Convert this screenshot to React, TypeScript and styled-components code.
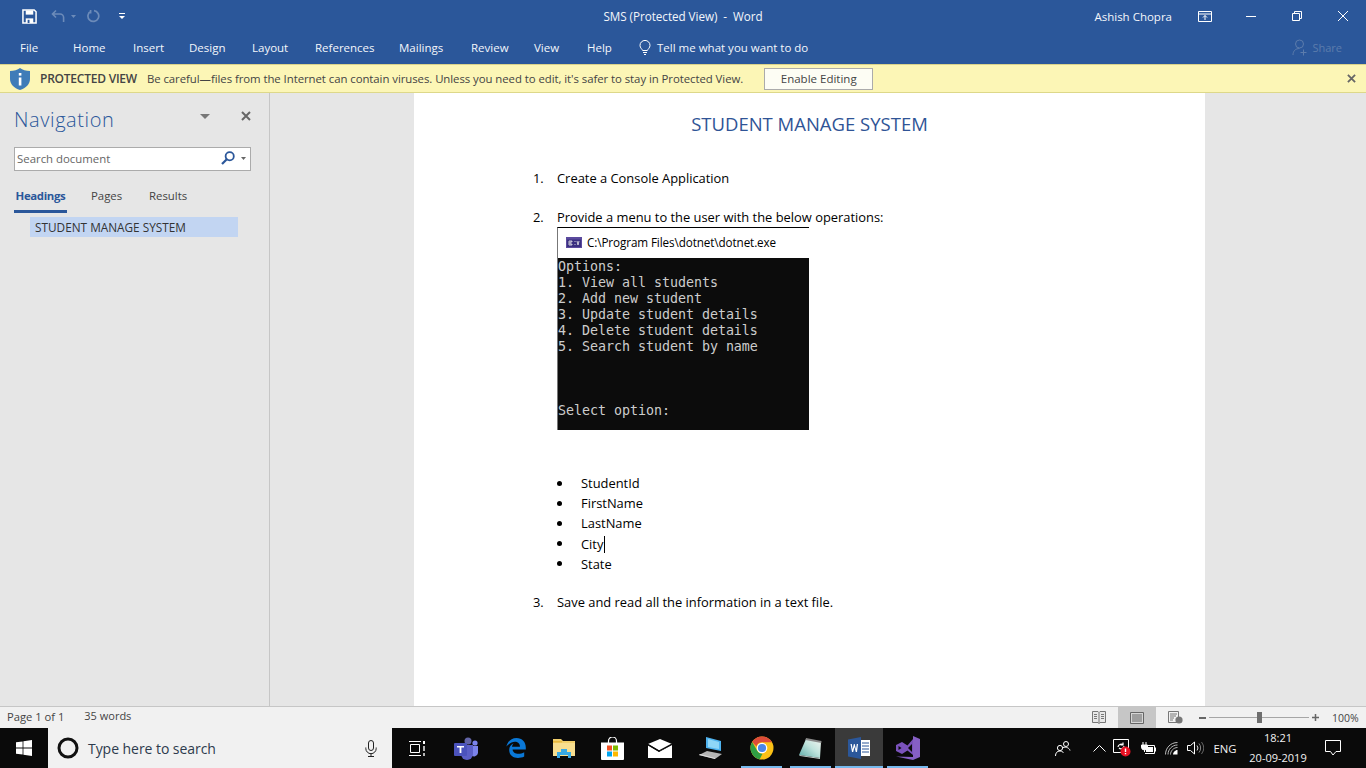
import React, { FC } from "react";
import styled, { createGlobalStyle } from "styled-components";

const UI_FONT = '"Open Sans", "Noto Sans", sans-serif';

const GlobalStyle = createGlobalStyle`
  html, body {
    margin: 0;
    padding: 0;
    width: 1366px;
    height: 768px;
    overflow: hidden;
    background: #e6e6e6;
    font-family: ${UI_FONT};
    font-size: 12px;
  }
  * { box-sizing: border-box; }
`;

const Screen = styled.div`
  width: 1366px;
  height: 768px;
  display: flex;
  flex-direction: column;
`;

/* ---- title bar ---- */

const TitleBar = styled.header`
  height: 32px;
  flex: none;
  background: #2b579a;
  color: #fff;
  display: grid;
  grid-template-columns: 1fr auto 1fr;
  align-items: center;
`;

const QuickAccess = styled.div`
  display: flex;
  align-items: center;
  padding-left: 22px;
  height: 100%;
`;

const QuickIcon = styled.svg<{ $gap?: number }>`
  display: block;
  margin-right: ${(p) => p.$gap ?? 0}px;
`;

const WindowTitle = styled.div`
  font-size: 11.7px;
  letter-spacing: -0.05px;
  white-space: pre;
  color: #f3f6fa;
`;

const WindowControls = styled.div`
  display: flex;
  align-items: center;
  justify-content: flex-end;
  height: 100%;
`;

const UserName = styled.span`
  font-size: 11.5px;
  color: #f3f6fa;
  margin-right: 10px;
`;

const ControlSlot = styled.div`
  width: 46px;
  display: flex;
  justify-content: center;
  align-items: center;
  height: 100%;
`;

/* ---- ribbon tabs ---- */

const Ribbon = styled.nav`
  height: 33px;
  flex: none;
  background: #2b579a;
  border-bottom: 1px solid #d9d28a;
  display: flex;
  align-items: center;
  padding-left: 20px;
  padding-bottom: 1px;
  color: #f3f6fa;
  font-size: 11.5px;
`;

const RibbonTab = styled.span<{ $w: number }>`
  width: ${(p) => p.$w}px;
  flex: none;
  white-space: nowrap;
`;

const TellMe = styled.span`
  display: flex;
  align-items: center;
  gap: 6px;
  white-space: nowrap;
`;

const ShareButton = styled.span`
  margin-left: auto;
  margin-right: 24px;
  display: flex;
  align-items: center;
  gap: 4px;
  color: #5c7cac;
  font-size: 11px;
`;

/* ---- protected view bar ---- */

const ProtectedBar = styled.div`
  height: 28px;
  flex: none;
  background: #fcf6b6;
  border-bottom: 1px solid #ddd88a;
  display: flex;
  align-items: center;
  padding-left: 10px;
  color: #444;
  font-size: 11.4px;
  white-space: nowrap;
`;

const ProtectedLabel = styled.strong`
  font-size: 12px;
  font-weight: 600;
  margin: 0 10px;
  letter-spacing: -0.23px;
`;

const ProtectedText = styled.span`
  letter-spacing: -0.06px;
`;

const EnableButton = styled.button`
  margin-left: 21px;
  width: 109px;
  height: 22px;
  padding: 0;
  background: #fdfdf4;
  border: 1px solid #ababab;
  font: 11.5px ${UI_FONT};
  color: #444;
`;

const BarClose = styled.svg`
  margin-left: auto;
  margin-right: 10px;
`;

/* ---- main area ---- */

const Main = styled.div`
  flex: 1;
  min-height: 0;
  display: flex;
  background: #e6e6e6;
`;

const NavPane = styled.aside`
  width: 270px;
  flex: none;
  border-right: 1px solid #c6c6c6;
  padding: 12px 18px 0 14px;
  display: flex;
  flex-direction: column;
`;

const NavHeader = styled.div`
  display: flex;
  align-items: center;
  height: 28px;

  & > svg {
    margin-bottom: 6px;
  }
`;

const NavTitle = styled.h1`
  margin: 0;
  flex: 1;
  font-size: 20px;
  font-weight: 300;
  color: #2b579a;
  letter-spacing: 0.6px;
`;

const NavSearch = styled.div`
  margin-top: 14px;
  width: 237px;
  height: 24px;
  background: #fff;
  border: 1px solid #ababab;
  display: flex;
  align-items: center;
  padding: 0 4px 2px 2px;
  color: #666;
  font-size: 11.4px;
`;

const NavSearchText = styled.span`
  flex: 1;
`;

const NavTabs = styled.div`
  margin-top: 13px;
  display: flex;
  height: 29px;
  width: 237px;
  font-size: 11.4px;
  color: #444;
`;

const NavTab = styled.span<{ $active?: boolean; $w: number }>`
  width: ${(p) => p.$w}px;
  text-align: ${(p) => (p.$active ? "center" : "left")};
  padding-left: ${(p) => (p.$active ? 0 : 13)}px;
  padding-top: 4px;
  color: ${(p) => (p.$active ? "#2b579a" : "#444")};
  font-weight: ${(p) => (p.$active ? 700 : 400)};
  letter-spacing: ${(p) => (p.$active ? "-0.35px" : "0")};
  border-bottom: 3px solid ${(p) => (p.$active ? "#2b579a" : "transparent")};
`;

const NavTabSpacer = styled.span`
  width: 11px;
`;

const HeadingRow = styled.div`
  margin: 4px 0 0 16px;
  width: 208px;
  height: 20px;
  background: #c2d5f2;
  padding-left: 5px;
  line-height: 20px;
  color: #333;
  font-size: 11.8px;
  white-space: nowrap;
`;

const DocArea = styled.main`
  flex: 1;
  display: flex;
  padding-left: 144px;
  min-width: 0;
`;

const Page = styled.article`
  width: 791px;
  flex: none;
  background: #fff;
  color: #000;
  padding: 19px 0 0 119px;
  font-size: 12.9px;
`;

const DocTitle = styled.h2`
  margin: 0 0 0 -119px;
  text-align: center;
  font-size: 18.5px;
  font-weight: 400;
  color: #2f5496;
  line-height: 24px;
`;

const ListRow = styled.div<{ $top: number }>`
  display: flex;
  margin-top: ${(p) => p.$top}px;
  line-height: 20px;
  height: 20px;
`;

const ItemMark = styled.span`
  width: 24px;
  flex: none;
`;

const Console = styled.div`
  margin: 0 0 0 24px;
  width: 252px;
  height: 203px;
  border-top: 1px solid #000;
  border-left: 1px solid #777;
`;

const ConsoleTitle = styled.div`
  height: 30px;
  display: flex;
  align-items: center;
  padding: 0 0 2px 8px;
  gap: 5px;
  font-size: 11.7px;
  letter-spacing: -0.1px;
  color: #000;
`;

const ConsoleBody = styled.pre`
  margin: 0;
  height: 172px;
  padding-top: 1px;
  background: #0c0c0c;
  color: #cccccc;
  font: 13.33px/16px "DejaVu Sans Mono", "Liberation Mono", monospace;
  letter-spacing: -0.03px;
  overflow: hidden;
`;

const BulletList = styled.div`
  margin-top: 43px;
  padding-left: 24px;
`;

const BulletRow = styled.div`
  display: flex;
  align-items: center;
  height: 20.2px;
  line-height: 20px;
`;

const BulletDot = styled.span`
  width: 5px;
  height: 5px;
  border-radius: 50%;
  background: #000;
  margin-right: 19px;
  flex: none;
`;

const Caret = styled.span`
  display: inline-block;
  width: 1px;
  height: 17px;
  margin-left: 1px;
  background: #000;
  vertical-align: -4px;
`;

/* ---- status bar ---- */

const StatusBar = styled.footer`
  height: 22px;
  flex: none;
  background: #f1f1f1;
  border-top: 1px solid #c6c6c6;
  display: flex;
  align-items: center;
  color: #444;
  font-size: 11.2px;
`;

const PageCount = styled.span`
  margin-left: 7px;
  margin-bottom: 2px;
`;

const WordCount = styled.span`
  margin-left: 20px;
  margin-bottom: 4px;
  font-size: 11px;
`;

const ViewButtons = styled.div`
  margin-left: auto;
  display: flex;
  height: 100%;
`;

const ViewButton = styled.div<{ $active?: boolean }>`
  width: 38px;
  display: flex;
  align-items: center;
  justify-content: center;
  background: ${(p) => (p.$active ? "#c6c6c6" : "transparent")};
`;

const ZoomBox = styled.div`
  display: flex;
  align-items: center;
  margin-left: 5px;
  gap: 3px;
`;

const ZoomTrack = styled.div`
  width: 100px;
  height: 1px;
  background: #a6a6a6;
  display: flex;
  align-items: center;
  justify-content: center;
`;

const ZoomThumb = styled.span`
  width: 5px;
  height: 11px;
  background: #6e6e6e;
  flex: none;
`;

const ZoomLabel = styled.span`
  margin: 0 7px 0 13px;
  width: 27px;
  font-size: 10.5px;
  white-space: nowrap;
`;

/* ---- taskbar ---- */

const Taskbar = styled.div`
  height: 40px;
  flex: none;
  background: #0a0a0a;
  display: flex;
  align-items: stretch;
  color: #fff;
`;

const StartButton = styled.div`
  width: 48px;
  display: flex;
  align-items: center;
  justify-content: center;
`;

const SearchBox = styled.div`
  width: 344px;
  background: #f1f1f1;
  display: flex;
  align-items: center;
  padding: 0 15px 0 9px;
  color: #2d3b4d;
  font-size: 14px;
`;

const SearchText = styled.span`
  flex: 1;
  margin-left: 9px;
  letter-spacing: -0.05px;
`;

const TaskButton = styled.div<{ $w?: number; $active?: boolean; $running?: boolean }>`
  width: ${(p) => p.$w ?? 49}px;
  flex: none;
  display: flex;
  align-items: center;
  justify-content: center;
  position: relative;
  background: ${(p) => (p.$active ? "#3a3a3a" : "transparent")};

  &::after {
    content: "";
    display: ${(p) => (p.$running ? "block" : "none")};
    position: absolute;
    left: ${(p) => (p.$active ? 0 : 4)}px;
    right: ${(p) => (p.$active ? 0 : 4)}px;
    bottom: 0;
    height: 2px;
    background: #76b9ed;
  }
`;

const Tray = styled.div`
  margin-left: auto;
  padding-right: 13px;
  display: flex;
  align-items: center;
  color: #f2f2f2;
`;

const TraySlot = styled.div<{ $w: number }>`
  width: ${(p) => p.$w}px;
  display: flex;
  justify-content: center;
  align-items: center;
  font-size: 11.3px;
`;

const Clock = styled.div`
  width: 70px;
  text-align: center;
  font-size: 11px;
  line-height: 20px;
`;

/* ---- drawings ---- */

const SaveIcon: FC = () => (
  <QuickIcon width="15" height="15" viewBox="0 0 16 16" $gap={14}>
    <path d="M1 1h12l2 2v12H1z" fill="none" stroke="#fff" strokeWidth="1.6" />
    <rect x="4" y="1.5" width="8" height="4.5" fill="#fff" />
    <rect x="4" y="10" width="8" height="5" fill="#fff" />
    <rect x="6" y="11.5" width="2" height="3.5" fill="#2b579a" />
  </QuickIcon>
);

const UndoIcon: FC = () => (
  <QuickIcon width="14" height="14" viewBox="0 0 14 14" $gap={6}>
    <path d="M5 1.5 1.5 5 5 8.5M1.5 5H9a3.6 3.6 0 0 1 3.6 3.6V13" fill="none" stroke="#6c8bb9" strokeWidth="1.6" />
  </QuickIcon>
);

const SmallCaret: FC<{ color: string; gap?: number }> = ({ color, gap }) => (
  <QuickIcon width="5" height="3" viewBox="0 0 5 3" $gap={gap}>
    <path d="M0 0h5L2.5 3z" fill={color} />
  </QuickIcon>
);

const RedoIcon: FC = () => (
  <QuickIcon width="14" height="14" viewBox="0 0 14 14" $gap={18}>
    <path d="M4 2.2A5.4 5.4 0 1 0 7 1.7M3.6 1v3.6" fill="none" stroke="#6c8bb9" strokeWidth="1.7" />
  </QuickIcon>
);

const CustomizeIcon: FC = () => (
  <QuickIcon width="6" height="6" viewBox="0 0 6 6">
    <rect width="6" height="1" fill="#fff" />
    <path d="M0 3h6L3 6z" fill="#fff" />
  </QuickIcon>
);

const RibbonDisplayIcon: FC = () => (
  <svg width="14" height="11" viewBox="0 0 14 11">
    <path d="M.5.5h13v10H.5zM.5 3h13" fill="none" stroke="#fff" />
    <path d="M7 9V4.5M5 6.5l2-2 2 2" fill="none" stroke="#fff" />
  </svg>
);

const MinimizeIcon: FC = () => (
  <svg width="10" height="1" viewBox="0 0 10 1">
    <rect width="10" height="1" fill="#fff" />
  </svg>
);

const RestoreIcon: FC = () => (
  <svg width="10" height="10" viewBox="0 0 10 10">
    <path d="M.5 2.5h7v7h-7zM2.5 2.5v-2h7v7h-2" fill="none" stroke="#fff" />
  </svg>
);

const CloseIcon: FC = () => (
  <svg width="10" height="10" viewBox="0 0 10 10">
    <path d="M0 0l10 10M10 0 0 10" stroke="#fff" />
  </svg>
);

const BulbIcon: FC = () => (
  <svg width="12" height="16" viewBox="0 0 12 16">
    <path d="M3.6 10.5C3.2 9 1 8 1 5.4a5 5 0 0 1 10 0c0 2.6-2.2 3.6-2.6 5.1z" fill="none" stroke="#fff" />
    <path d="M4 12.5h4M5 14.5h2" stroke="#fff" />
  </svg>
);

const ShareIcon: FC = () => (
  <svg width="16" height="17" viewBox="0 0 16 17">
    <circle cx="7.5" cy="5" r="4" fill="none" stroke="#5c7cac" />
    <path d="M1 16c0-4 2.5-6.5 6.5-6.5M11.5 10.5v6M8.5 13.5h6" fill="none" stroke="#5c7cac" />
  </svg>
);

const ShieldIcon: FC = () => (
  <svg width="20" height="22" viewBox="0 0 20 22" style={{ flex: "none" }}>
    <path d="M10 0c2.5 2 6 3 10 3v8c0 5-4 9-10 11C4 20 0 16 0 11V3c4 0 7.5-1 10-3z" fill="#3f7cb8" />
    <rect x="8.8" y="5" width="2.6" height="2.6" fill="#fff" />
    <rect x="8.8" y="9.5" width="2.6" height="8" fill="#fff" />
  </svg>
);

const BoldClose: FC<{ size: number }> = ({ size }) => (
  <svg width={size} height={size} viewBox="0 0 10 10">
    <path d="M1 1l8 8M9 1 1 9" stroke="#666" strokeWidth="2" />
  </svg>
);

const SearchGlass: FC = () => (
  <svg width="14" height="14" viewBox="0 0 14 14" style={{ marginRight: 6 }}>
    <circle cx="8.7" cy="5.3" r="4.1" fill="none" stroke="#2b579a" strokeWidth="1.8" />
    <path d="M5.8 8.2 1 13" stroke="#2b579a" strokeWidth="2.2" />
  </svg>
);

const ConsoleIcon: FC = () => (
  <svg width="16" height="11" viewBox="0 0 16 11">
    <rect width="16" height="11" fill="#5b4a9e" />
    <rect x="1" y="2.5" width="14" height="7.5" fill="#3a3080" />
    <path d="M3 4h3v1H4v2h2v1H3zM9 4v1M9 7v1M11 4l1 4M13 4l-1 4" stroke="#eee" strokeWidth=".8" fill="none" />
  </svg>
);

const ReadModeIcon: FC = () => (
  <svg width="14" height="13" viewBox="0 0 14 13">
    <path d="M.5.5h5.5L7 1.5 8 .5h5.5v11H8L7 12.5 6 11.5H.5zM7 1.5v11" fill="#e8e8e8" stroke="#777" />
    <path d="M2 3.5h3M2 5.5h3M2 7.5h3M9 3.5h3M9 5.5h3M9 7.5h3" stroke="#777" />
  </svg>
);

const PrintLayoutIcon: FC = () => (
  <svg width="14" height="12" viewBox="0 0 14 12">
    <path d="M.5.5h13v11H.5z" fill="#d6d6d6" stroke="#666" />
    <path d="M2 3h10M2 5h10M2 7h10M2 9h10" stroke="#666" />
  </svg>
);

const WebLayoutIcon: FC = () => (
  <svg width="15" height="13" viewBox="0 0 15 13">
    <path d="M.5.5h10v11H.5z" fill="none" stroke="#777" />
    <path d="M2 3h7M2 5h6M2 7h4M2 9h3" stroke="#777" />
    <circle cx="11" cy="9" r="3.6" fill="#777" />
  </svg>
);

const WinLogo: FC = () => (
  <svg width="16" height="16" viewBox="0 0 16 16">
    <path d="M0 2.3 6.6 1.4v6.2H0zM7.4 1.3 16 0v7.6H7.4zM0 8.4h6.6v6.2L0 13.7zM7.4 8.4H16V16l-8.6-1.3z" fill="#fff" />
  </svg>
);

const CortanaIcon: FC = () => (
  <svg width="22" height="22" viewBox="0 0 22 22" style={{ flex: "none" }}>
    <circle cx="11" cy="11" r="9" fill="none" stroke="#111" strokeWidth="3" />
  </svg>
);

const MicIcon: FC = () => (
  <svg width="12" height="17" viewBox="0 0 12 17">
    <rect x="3.5" y=".5" width="5" height="10" rx="2.5" fill="none" stroke="#222" />
    <path d="M.8 7.5v1a5.2 5.2 0 0 0 10.4 0v-1M6 13.5v3M3 16.5h6" fill="none" stroke="#222" />
  </svg>
);

const TaskViewIcon: FC = () => (
  <svg width="16" height="15" viewBox="0 0 16 15">
    <path d="M0 .5h12M0 14.5h12M1.5 3.5h9v8h-9z" fill="none" stroke="#fff" />
    <rect x="14" y="0" width="2" height="3" fill="#fff" />
    <path d="M15 5v5M15 12v3" stroke="#fff" strokeWidth="1.4" />
  </svg>
);

const TeamsIcon: FC = () => (
  <svg width="25" height="23" viewBox="0 0 25 23">
    <circle cx="14" cy="4" r="3.5" fill="#6264a7" />
    <circle cx="21" cy="6" r="2.6" fill="#7b83eb" />
    <path d="M17 9h7v7a4 4 0 0 1-7 2z" fill="#7b83eb" />
    <path d="M7 8h12v9a6 6 0 0 1-12 0z" fill="#5b5fc7" />
    <rect x="0" y="6" width="13" height="13" rx="1" fill="#4b53bc" />
    <path d="M3 9h7v1.6H7.4V16H5.6v-5.4H3z" fill="#fff" />
  </svg>
);

const EdgeIcon: FC = () => (
  <svg width="20" height="20" viewBox="0 0 20 20">
    <path d="M.3 9C1.3 3.6 5.4 0 10.5 0c5.6 0 9.3 4 9.3 9.6v2H6.6c.2 4.4 6.6 5.5 11.6 2.7v4.2c-5.8 2.9-14.8 1.9-15-6.5-.1-3 1.500-5.500 4.400-6.800-1 1.200-1.500 2.300-1.600 3.600h7.900c.5-4.600-6.500-8.200-13.600-.2z" fill="#0a78d7" />
  </svg>
);

const ExplorerIcon: FC = () => (
  <svg width="22" height="19" viewBox="0 0 22 19">
    <path d="M0 0h8l2 2h12v15H0z" fill="#f2cf6b" />
    <path d="M0 4h22v13H0z" fill="#f8de8f" />
    <path d="M0 2h9v1.500H0z" fill="#e8b93f" />
    <path d="M4 19v-6h4v-3h6v3h4v6h-3v-3H7v3z" fill="#38a9e4" />
  </svg>
);

const StoreIcon: FC = () => (
  <svg width="23" height="23" viewBox="0 0 23 23">
    <path d="M7.500 6V4a4 4 0 0 1 8 0v2" fill="none" stroke="#fff" strokeWidth="1.200" />
    <path d="M0 5.500h23V22a1 1 0 0 1-1 1H1a1 1 0 0 1-1-1z" fill="#fff" />
    <rect x="6" y="8.500" width="5" height="5" fill="#f25022" />
    <rect x="12" y="8.500" width="5" height="5" fill="#7fba00" />
    <rect x="6" y="14.500" width="5" height="5" fill="#00a4ef" />
    <rect x="12" y="14.500" width="5" height="5" fill="#ffb900" />
  </svg>
);

const MailIcon: FC = () => (
  <svg width="24" height="19" viewBox="0 0 24 19">
    <path d="M0 5 12 0l12 5-12 7z" fill="#fff" />
    <path d="M0 6.500 11 13l13-7V19H0z" fill="#fff" />
    <path d="M0 5.500 11 12l13-7" fill="none" stroke="#0a0a0a" strokeWidth="1.400" />
  </svg>
);

const ThisPcIcon: FC = () => (
  <svg width="24" height="22" viewBox="0 0 24 22">
    <path d="M7 0l15 4v10L7 11z" fill="#4fb3ef" />
    <path d="M9 2l11 3v7L9 10z" fill="#8fd6f7" />
    <path d="M0 18l8-4 15 3-7 5z" fill="#b5b5b5" />
    <path d="M0 18l16 4v-1L1 17z" fill="#ddd" />
  </svg>
);

const ChromeIcon: FC = () => (
  <svg width="24" height="24" viewBox="0 0 24 24">
    <circle cx="12" cy="12" r="11.500" fill="#fbc116" />
    <path d="M12 .5a11.500 11.500 0 0 1 10 5.800H12a5.700 5.700 0 0 0-5.500 4.200L2.200 6A11.500 11.500 0 0 1 12 .5z" fill="#dd4b39" />
    <path d="M2.200 6l5 8.700a5.700 5.700 0 0 0 5.300 3L9.700 23.300A11.500 11.500 0 0 1 2.200 6z" fill="#2f9e44" />
    <circle cx="12" cy="12" r="5.300" fill="#fff" />
    <circle cx="12" cy="12" r="4.100" fill="#4a86e8" />
  </svg>
);

const NotepadIcon: FC = () => (
  <svg width="23" height="21" viewBox="0 0 23 21">
    <defs>
      <linearGradient id="padFill" x1="0" y1="1" x2="1" y2="0">
        <stop offset="0" stopColor="#5aa9a6" />
        <stop offset="0.55" stopColor="#bfe3dc" />
        <stop offset="1" stopColor="#f4f7f2" />
      </linearGradient>
    </defs>
    <path d="M7 1l15 3-1 16-21-3z" fill="url(#padFill)" />
    <path d="M7 0l15.500 3-.2 2L6.500 2z" fill="#8a8a8a" />
    <path d="M0 17l21 3v1L1 18z" fill="#c9d2d0" />
  </svg>
);

const WordIcon: FC = () => (
  <svg width="23" height="22" viewBox="0 0 23 22">
    <path d="M7 3h15v16H7z" fill="#fff" />
    <path d="M14 6h7M14 9h7M14 12h7M14 15h7" stroke="#2b579a" />
    <path d="M0 2.500 13 0v22L0 19.500z" fill="#2b579a" />
    <path d="M2.500 7l1.500 8 1.200 0 1.300-5 1.300 5h1.200L10 7H8.800l-.8 5.300L6.700 7h-.8L4.600 12.300 3.800 7z" fill="#fff" />
  </svg>
);

const VisualStudioIcon: FC = () => (
  <svg width="24" height="24" viewBox="0 0 24 24">
    <path d="M17 0l7 3v18l-7 3L0 20.500 17 21z" fill="#865fc5" />
    <path d="M17 3v16L11.500 14.500 6 18 0 15V9l6-3 5.500 3.500zM16 8l-4 4 4 4zM2.500 10v4L5.500 12z" fill="#7a52bb" fillRule="evenodd" />
  </svg>
);

const PeopleIcon: FC = () => (
  <svg width="16" height="15" viewBox="0 0 16 15">
    <circle cx="5" cy="7" r="2.600" fill="none" stroke="#fff" />
    <circle cx="11" cy="3" r="2.500" fill="none" stroke="#fff" />
    <path d="M.5 15c0-3 1.500-5 4.500-5 2 0 3 1 3.500 2M8 6.500c3-1 6.500.5 7 3" fill="none" stroke="#fff" />
  </svg>
);

const ChevronIcon: FC = () => (
  <svg width="13" height="7" viewBox="0 0 13 7">
    <path d="M.5 6.500l6-6 6 6" fill="none" stroke="#fff" />
  </svg>
);

const AlertTrayIcon: FC = () => (
  <svg width="20" height="18" viewBox="0 0 20 18">
    <path d="M.5.5h15v13H.5z" fill="none" stroke="#fff" />
    <path d="M5 8a3 3 0 0 1 5-2M11 7a3 3 0 0 1-5 2M10 3.500V6H7.500" fill="none" stroke="#fff" strokeWidth="1.200" />
    <circle cx="12.500" cy="12.500" r="5" fill="#e81123" />
    <path d="M12.500 9.500v3.500M12.500 14v1.200" stroke="#fff" strokeWidth="1.400" />
  </svg>
);

const BatteryIcon: FC = () => (
  <svg width="16" height="12" viewBox="0 0 16 12">
    <path d="M3 0v3M6 0v3M1.500 3h6v2a3 3 0 0 1-6 0zM4.500 8v2" fill="#fff" stroke="#fff" />
    <path d="M5 3.500h9.500v8H5" fill="none" stroke="#fff" />
    <rect x="6" y="5" width="7" height="5" fill="#fff" />
    <rect x="15" y="5.500" width="1" height="4" fill="#fff" />
  </svg>
);

const WifiIcon: FC = () => (
  <svg width="13" height="13" viewBox="0 0 13 13">
    <path d="M.5 12.500c0-6.500 5-12 12-12M3 12.500c0-5 4-9.500 9.500-9.500M5.500 12.500c0-3.500 3-7 7-7" fill="none" stroke="#bbb" strokeWidth="1" />
    <path d="M8 12.500c0-2 2-4.500 4.500-4.500v4.500z" fill="#fff" />
  </svg>
);

const VolumeIcon: FC = () => (
  <svg width="17" height="14" viewBox="0 0 17 14">
    <path d="M.5 4.500h3l4-3.500v12l-4-3.500h-3z" fill="none" stroke="#fff" />
    <path d="M10 4.500a4 4 0 0 1 0 5" fill="none" stroke="#ddd" />
    <path d="M12 2.500a7 7 0 0 1 0 9" fill="none" stroke="#888" />
    <path d="M14.500 1a10 10 0 0 1 0 12" fill="none" stroke="#666" />
  </svg>
);

const NotificationIcon: FC = () => (
  <svg width="16" height="16" viewBox="0 0 16 16">
    <path d="M.5.5h15v11h-4.500L8 15l-2.500-3.500h-5z" fill="none" stroke="#fff" />
  </svg>
);

const App: FC = () => (
  <Screen>
    <GlobalStyle />
    <TitleBar>
      <QuickAccess>
        <SaveIcon />
        <UndoIcon />
        <SmallCaret color="#6c8bb9" gap={11} />
        <RedoIcon />
        <CustomizeIcon />
      </QuickAccess>
      <WindowTitle>SMS (Protected View)  -  Word</WindowTitle>
      <WindowControls>
        <UserName>Ashish Chopra</UserName>
        <ControlSlot><RibbonDisplayIcon /></ControlSlot>
        <ControlSlot><MinimizeIcon /></ControlSlot>
        <ControlSlot><RestoreIcon /></ControlSlot>
        <ControlSlot><CloseIcon /></ControlSlot>
      </WindowControls>
    </TitleBar>

    <Ribbon>
      <RibbonTab $w={53}>File</RibbonTab>
      <RibbonTab $w={60}>Home</RibbonTab>
      <RibbonTab $w={56}>Insert</RibbonTab>
      <RibbonTab $w={63}>Design</RibbonTab>
      <RibbonTab $w={63}>Layout</RibbonTab>
      <RibbonTab $w={84}>References</RibbonTab>
      <RibbonTab $w={72}>Mailings</RibbonTab>
      <RibbonTab $w={63}>Review</RibbonTab>
      <RibbonTab $w={53}>View</RibbonTab>
      <RibbonTab $w={52}>Help</RibbonTab>
      <TellMe>
        <BulbIcon />
        Tell me what you want to do
      </TellMe>
      <ShareButton>
        <ShareIcon />
        Share
      </ShareButton>
    </Ribbon>

    <ProtectedBar>
      <ShieldIcon />
      <ProtectedLabel>PROTECTED VIEW</ProtectedLabel>
      <ProtectedText>
        Be careful—files from the Internet can contain viruses. Unless you need to edit, it's safer to stay in Protected View.
      </ProtectedText>
      <EnableButton>Enable Editing</EnableButton>
      <BarClose width="9" height="9" viewBox="0 0 10 10">
        <path d="M1 1l8 8M9 1 1 9" stroke="#666" strokeWidth="2" />
      </BarClose>
    </ProtectedBar>

    <Main>
      <NavPane>
        <NavHeader>
          <NavTitle>Navigation</NavTitle>
          <svg width="10" height="5" viewBox="0 0 10 5" style={{ marginRight: 31 }}>
            <path d="M0 0h10L5 5z" fill="#777" />
          </svg>
          <BoldClose size={10} />
        </NavHeader>
        <NavSearch>
          <NavSearchText>Search document</NavSearchText>
          <SearchGlass />
          <SmallCaret color="#666" />
        </NavSearch>
        <NavTabs>
          <NavTab $active $w={53}>Headings</NavTab>
          <NavTabSpacer />
          <NavTab $w={58}>Pages</NavTab>
          <NavTab $w={60}>Results</NavTab>
        </NavTabs>
        <HeadingRow>STUDENT MANAGE SYSTEM</HeadingRow>
      </NavPane>

      <DocArea>
        <Page>
          <DocTitle>STUDENT MANAGE SYSTEM</DocTitle>
          <ListRow $top={32}>
            <ItemMark>1.</ItemMark>
            Create a Console Application
          </ListRow>
          <ListRow $top={19}>
            <ItemMark>2.</ItemMark>
            Provide a menu to the user with the below operations:
          </ListRow>
          <Console>
            <ConsoleTitle>
              <ConsoleIcon />
              C:\Program Files\dotnet\dotnet.exe
            </ConsoleTitle>
            <ConsoleBody>{`Options:
1. View all students
2. Add new student
3. Update student details
4. Delete student details
5. Search student by name



Select option:`}</ConsoleBody>
          </Console>
          <BulletList>
            <BulletRow><BulletDot />StudentId</BulletRow>
            <BulletRow><BulletDot />FirstName</BulletRow>
            <BulletRow><BulletDot />LastName</BulletRow>
            <BulletRow><BulletDot /><span>City<Caret /></span></BulletRow>
            <BulletRow><BulletDot />State</BulletRow>
          </BulletList>
          <ListRow $top={18}>
            <ItemMark>3.</ItemMark>
            Save and read all the information in a text file.
          </ListRow>
        </Page>
      </DocArea>
    </Main>

    <StatusBar>
      <PageCount>Page 1 of 1</PageCount>
      <WordCount>35 words</WordCount>
      <ViewButtons>
        <ViewButton><ReadModeIcon /></ViewButton>
        <ViewButton $active><PrintLayoutIcon /></ViewButton>
        <ViewButton><WebLayoutIcon /></ViewButton>
      </ViewButtons>
      <ZoomBox>
        <svg width="7" height="2" viewBox="0 0 7 2"><rect width="7" height="2" fill="#666" /></svg>
        <ZoomTrack><ZoomThumb /></ZoomTrack>
        <svg width="7" height="7" viewBox="0 0 7 7"><path d="M3.500 0v7M0 3.500h7" stroke="#666" strokeWidth="1.500" /></svg>
      </ZoomBox>
      <ZoomLabel>100%</ZoomLabel>
    </StatusBar>

    <Taskbar>
      <StartButton><WinLogo /></StartButton>
      <SearchBox>
        <CortanaIcon />
        <SearchText>Type here to search</SearchText>
        <MicIcon />
      </SearchBox>
      <TaskButton $w={50}><TaskViewIcon /></TaskButton>
      <TaskButton><TeamsIcon /></TaskButton>
      <TaskButton><EdgeIcon /></TaskButton>
      <TaskButton $w={48}><ExplorerIcon /></TaskButton>
      <TaskButton $w={48}><StoreIcon /></TaskButton>
      <TaskButton $w={48}><MailIcon /></TaskButton>
      <TaskButton $w={53}><ThisPcIcon /></TaskButton>
      <TaskButton $running><ChromeIcon /></TaskButton>
      <TaskButton $running><NotepadIcon /></TaskButton>
      <TaskButton $w={48} $active $running><WordIcon /></TaskButton>
      <TaskButton $running><VisualStudioIcon /></TaskButton>
      <Tray>
        <TraySlot $w={48}><PeopleIcon /></TraySlot>
        <TraySlot $w={24}><ChevronIcon /></TraySlot>
        <TraySlot $w={24}><AlertTrayIcon /></TraySlot>
        <TraySlot $w={25}><BatteryIcon /></TraySlot>
        <TraySlot $w={23}><WifiIcon /></TraySlot>
        <TraySlot $w={24}><VolumeIcon /></TraySlot>
        <TraySlot $w={36}>ENG</TraySlot>
        <Clock>18:21<br />20-09-2019</Clock>
        <TraySlot $w={40}><NotificationIcon /></TraySlot>
      </Tray>
    </Taskbar>
  </Screen>
);

export default App;
